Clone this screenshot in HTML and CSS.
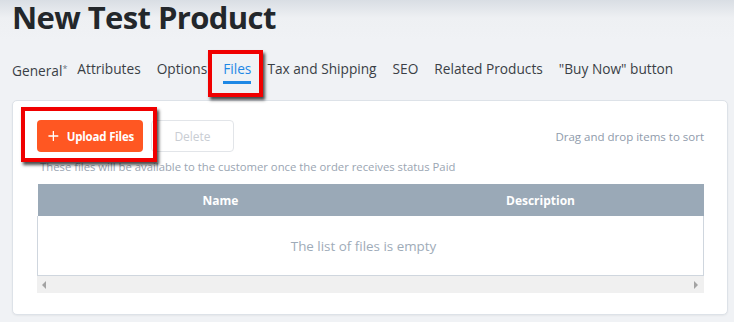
FILE: index.html
```html
<!DOCTYPE html>
<html lang="en">
<head>
  <meta charset="UTF-8">
  <title>New Test Product</title>
  <link rel="stylesheet" href="styles.css">
</head>
<body>
  <div class="page">
    <h1 class="title">New Test Product</h1>

    <nav class="tabs">
      <a class="tab tab-first">General<sup>*</sup></a>
      <a class="tab">Attributes</a>
      <a class="tab">Options</a>
      <a class="tab active">Files</a>
      <a class="tab">Tax and Shipping</a>
      <a class="tab">SEO</a>
      <a class="tab">Related Products</a>
      <a class="tab">"Buy Now" button</a>
    </nav>

    <section class="card">
      <div class="toolbar">
        <button class="btn btn-primary">
          <svg width="12" height="12" viewBox="0 0 12 12"><path d="M6 0.5v11M0.5 6h11" stroke="#fff" stroke-width="1.4" fill="none"/></svg>
          <span>Upload Files</span>
        </button>
        <button class="btn btn-disabled">Delete</button>
        <span class="hint">Drag and drop items to sort</span>
      </div>
      <p class="note">These files will be available to the customer once the order receives status Paid</p>

      <div class="table-wrap">
        <table class="files">
          <thead>
            <tr>
              <th class="col-name">Name</th>
              <th class="col-desc">Description</th>
              <th></th>
            </tr>
          </thead>
          <tbody>
            <tr>
              <td colspan="3" class="empty">The list of files is empty</td>
            </tr>
          </tbody>
        </table>
        <div class="hscroll">
          <span class="arrow arrow-left"></span>
          <span class="arrow arrow-right"></span>
        </div>
      </div>
    </section>

    <!-- red highlight frames drawn over the screenshot -->
    <span class="mark mark-tab"></span>
    <span class="mark mark-upload"></span>
  </div>
</body>
</html>
```

FILE: styles.css
```css
body {
  margin: 0;
  font-family: "Open Sans", "Noto Sans", sans-serif;
  background: linear-gradient(#d9dee4 0, #eef0f3 18px, #f0f2f5 40px);
  height: 322px;
  overflow: hidden;
}
.page {
  position: relative;
  padding: 0 6px 0 12px;
}
.title {
  margin: 0;
  font-size: 31px;
  line-height: 34px;
  font-weight: 700;
  letter-spacing: -0.6px;
  color: #23272b;
}
.tabs {
  display: flex;
  margin-top: 26px;
  height: 28px;
}
.tab {
  font-size: 13.7px;
  color: #3a3f45;
  padding: 0 8px;
  line-height: 18px;
  white-space: nowrap;
}
.tab-first {
  padding-left: 0;
  padding-right: 2px;
}
.tab sup {
  font-size: 9px;
  color: #6b7480;
  vertical-align: 4px;
}
.tab.active {
  color: #1e88e5;
  position: relative;
}
.tab.active::after {
  content: "";
  position: absolute;
  left: 8px;
  right: 8px;
  top: 21px;
  height: 3px;
  background: #1e88e5;
}
.card {
  margin-top: 12px;
  background: #fff;
  border: 1px solid #dde2e8;
  border-radius: 5px;
  padding: 19px 23px 21px 24px;
  box-shadow: 0 1px 2px rgba(0, 0, 0, 0.05);
}
.toolbar {
  display: flex;
  align-items: center;
  gap: 8px;
}
.btn {
  font-family: inherit;
  height: 32px;
  border-radius: 4px;
  font-size: 12px;
  display: inline-flex;
  align-items: center;
  white-space: nowrap;
}
.btn-primary {
  background: #ff5722;
  border: 0;
  color: #fff;
  font-weight: 700;
  font-size: 11.5px;
  letter-spacing: -0.2px;
  padding: 0 9px 0 11px;
  gap: 8px;
  width: 106px;
}
.btn-disabled {
  background: #fff;
  border: 1px solid #e2e5e9;
  color: #c9cdd3;
  width: 83px;
  justify-content: center;
}
.hint {
  margin-left: auto;
  font-size: 11.5px;
  color: #8f9bab;
}
.note {
  margin: 7px 0 0 3px;
  font-size: 11.3px;
  line-height: 16px;
  color: #9aa5b2;
}
.table-wrap {
  margin-top: 9px;
}
.files {
  width: 100%;
  border-collapse: collapse;
  table-layout: fixed;
}
.files th {
  background: #9aa9b7;
  color: #fff;
  font-size: 12px;
  font-weight: 700;
  height: 32px;
  padding: 0;
}
.col-name {
  width: 366px;
}
.col-desc {
  width: 274px;
}
.empty {
  height: 59px;
  padding: 0 14px 0 0;
  text-align: center;
  font-size: 13.4px;
  color: #9eabb8;
  border: 1px solid #cfd6de;
  border-top: 0;
}
.hscroll {
  position: relative;
  height: 17px;
  background: #f0f0f0;
}
.arrow {
  position: absolute;
  top: 5px;
  width: 0;
  height: 0;
  border-top: 4px solid transparent;
  border-bottom: 4px solid transparent;
}
.arrow-left {
  left: 5px;
  border-right: 4px solid #a3a3a3;
}
.arrow-right {
  right: 6px;
  border-left: 4px solid #a3a3a3;
}
.mark {
  position: absolute;
  border: 4px solid #f00000;
  box-shadow: 2px 3px 3px rgba(0, 0, 0, 0.7);
}
.mark-tab {
  left: 208px;
  top: 50px;
  width: 47px;
  height: 39px;
}
.mark-upload {
  left: 21px;
  top: 107px;
  width: 128px;
  height: 47px;
}
```
